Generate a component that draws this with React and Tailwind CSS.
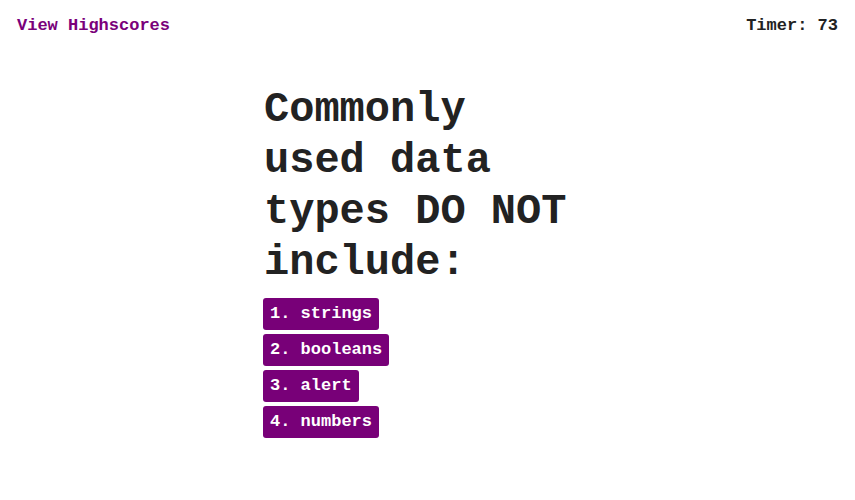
export default function App() {
  const answers = ["1. strings", "2. booleans", "3. alert", "4. numbers"];
  return (
    <div className="min-h-[500px] bg-white" style={{ fontFamily: '"Liberation Mono", "Courier New", monospace' }}>
      <header className="flex justify-between items-center px-[17px] pt-[16px] text-[17px] font-bold leading-[20px]">
        <a className="text-[#7a007a]">View Highscores</a>
        <span className="text-[#222]">Timer: 73</span>
      </header>
      <main className="mx-auto w-[327px] mt-[49px]">
        <h1 className="text-[42px] font-bold leading-[51px] text-[#222]">Commonly used data types DO NOT include:</h1>
        <div className="flex flex-col items-start gap-[4px] mt-[9px]">
          {answers.map((a) => (
            <button key={a} className="bg-[#780078] text-white font-bold text-[17px] h-[32px] px-[7px] rounded-[3px] -ml-[1px]">
              {a}
            </button>
          ))}
        </div>
      </main>
    </div>
  );
}
